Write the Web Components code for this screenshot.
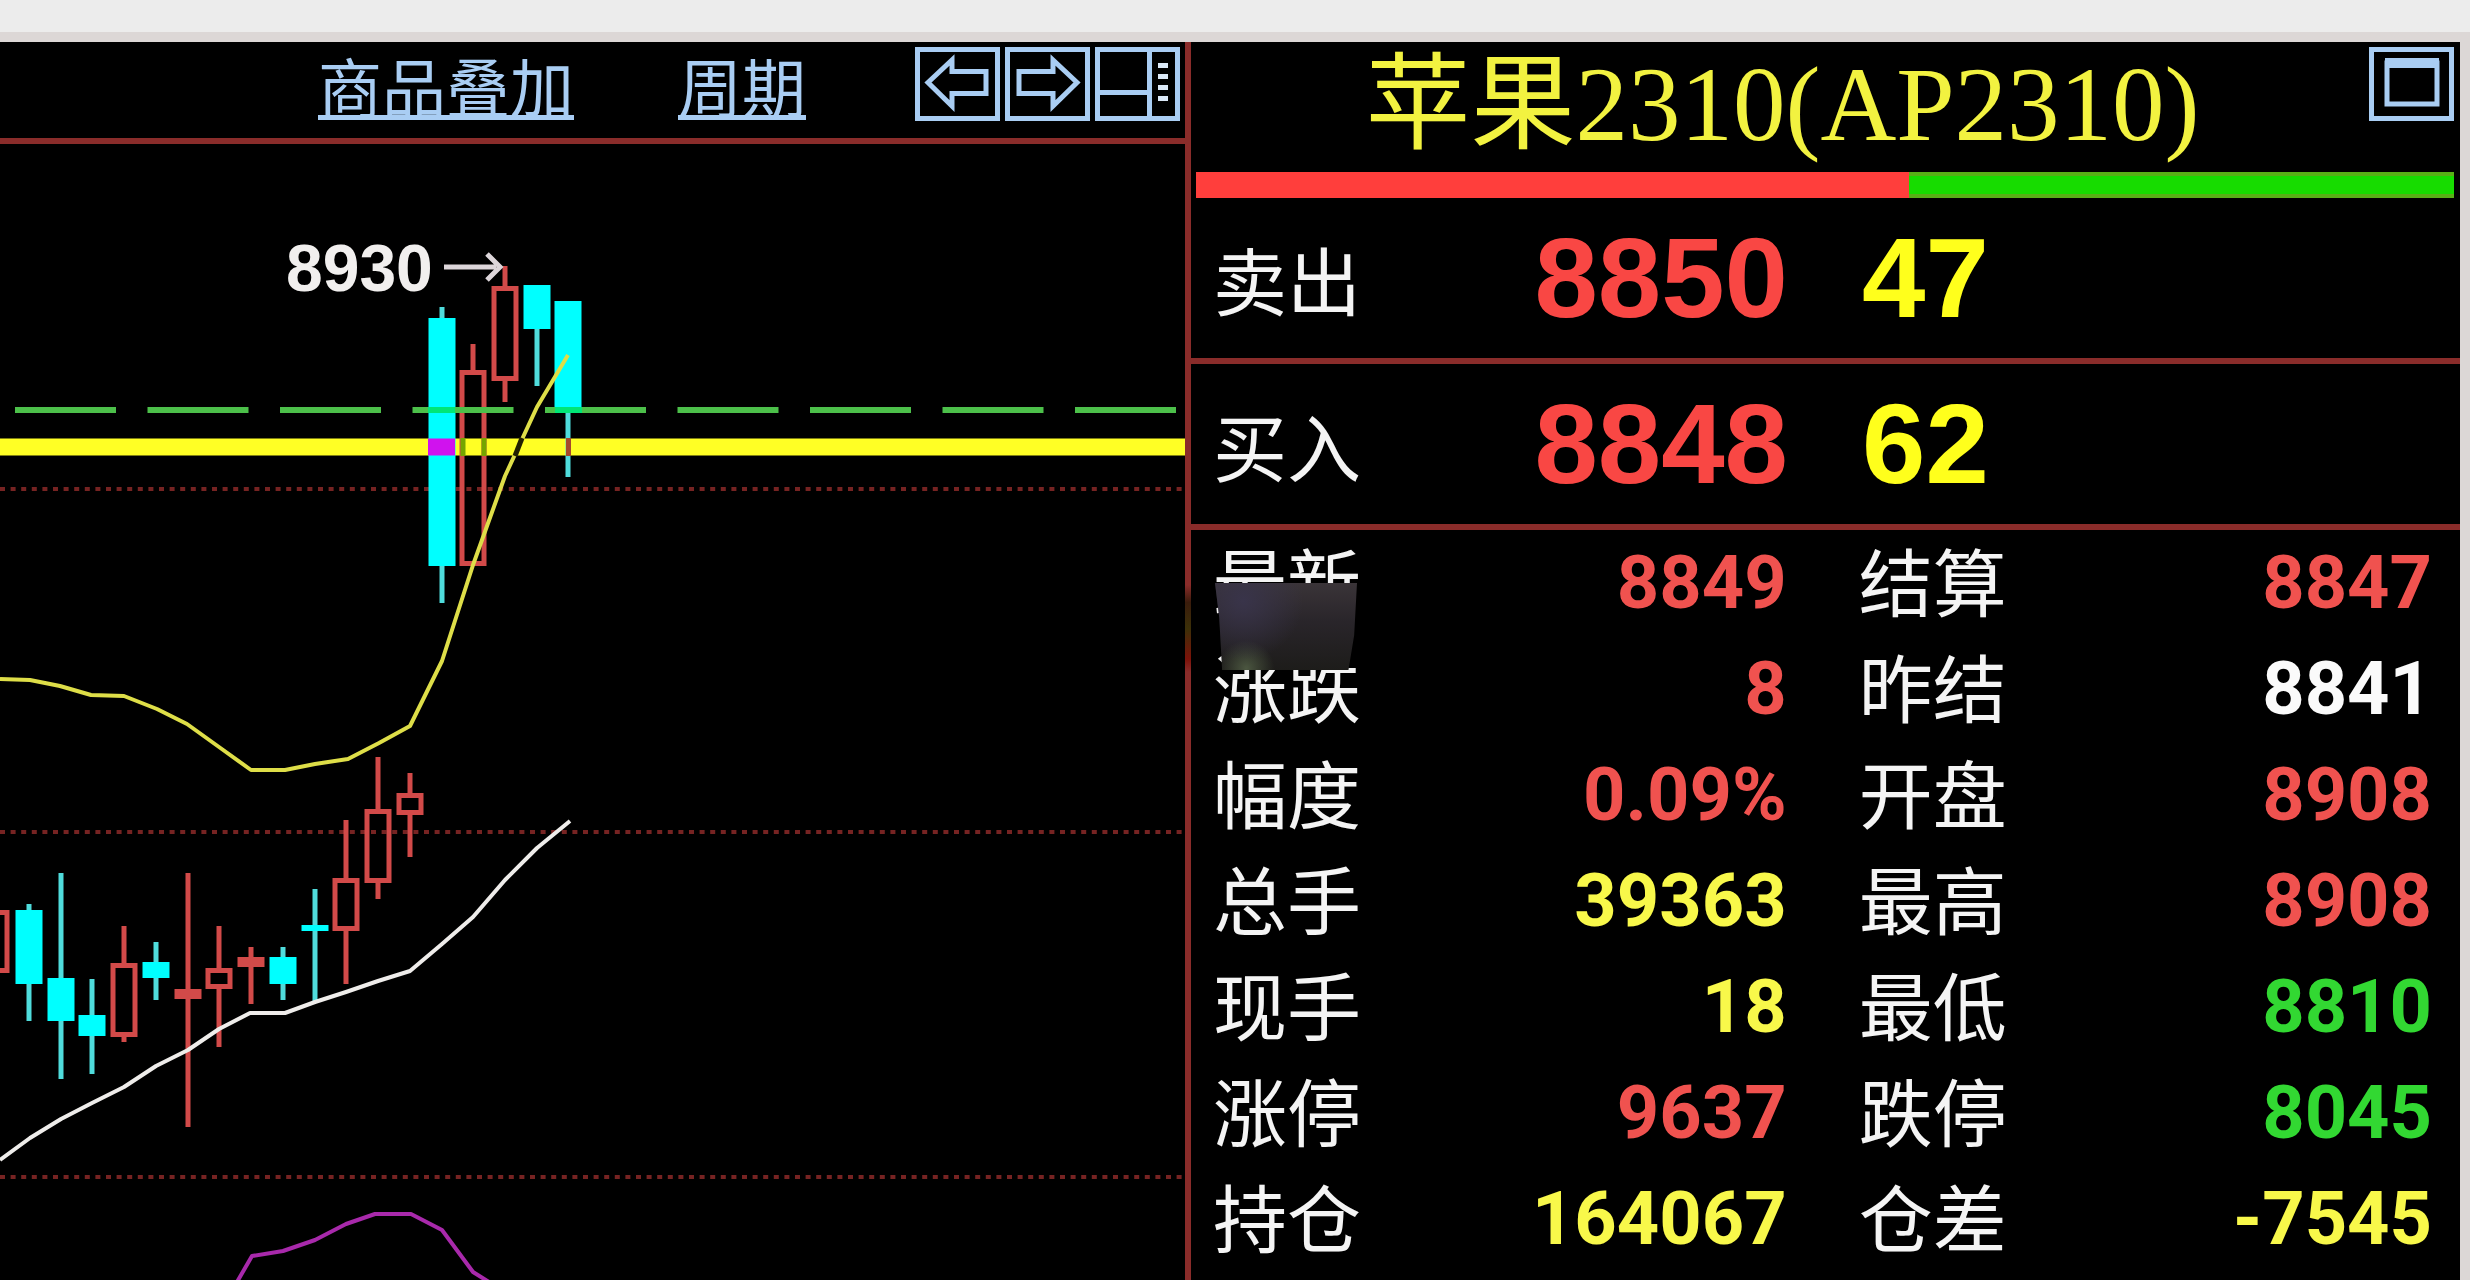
<!DOCTYPE html>
<html lang="zh-CN">
<head>
<meta charset="utf-8">
<title>苹果2310(AP2310)</title>
<style>
html, body { margin: 0; height: 100%; background: #000; }
body { font-family: "Liberation Sans", "Noto Sans CJK SC", sans-serif; }
</style>
</head>
<body>
<quote-app></quote-app>
<script>
const define = (name, html, setup) => customElements.define(name, class extends HTMLElement {
  constructor() {
    super();
    this.attachShadow({ mode: 'open' }).innerHTML = html;
  }
  connectedCallback() { if (setup) setup(this, this.shadowRoot); }
});

define('icon-button', `
<style>
:host { display: block; width: 85px; height: 74px; }
button { display: block; width: 100%; height: 100%; margin: 0; padding: 0; border: 0; background: #000; color: #a9cdf3; cursor: pointer; }
::slotted(svg) { display: block; width: 100%; height: 100%; fill: none; stroke: currentColor; stroke-width: 5; }
</style>
<button type="button"><slot></slot></button>`, (host, root) => {
  root.querySelector('button').setAttribute('aria-label', host.getAttribute('label') || '');
});

define('tool-bar', `
<style>
:host { display: flex; justify-content: flex-end; align-items: center; padding: 5px 5px 17px; border-bottom: 6px solid #8a2c2a; }
nav { display: flex; gap: 104px; margin-right: 109px; }
a { font: 64px/74px "Noto Sans CJK SC", sans-serif; font-weight: 400; color: #a9cdf3; text-decoration: underline; text-decoration-thickness: 5px; text-underline-offset: 3px; text-decoration-skip-ink: none; white-space: nowrap; }
.icons { display: flex; gap: 5px; }
</style>
<nav><a href="#overlay">商品叠加</a><a href="#period">周期</a></nav>
<div class="icons">
<icon-button label="后退"><svg viewBox="0 0 85 74"><path d="M2.500 2.500h80v69h-80z"/><path d="M71 24.500H37V13L13 35.500 37 59V46.500H71z"/></svg></icon-button>
<icon-button label="前进"><svg viewBox="0 0 85 74"><path d="M2.500 2.500h80v69h-80z"/><path d="M14 24.500H48V13L72 35.500 48 59V46.500H14z"/></svg></icon-button>
<icon-button label="布局"><svg viewBox="0 0 85 74"><path d="M2.500 2.500h80v69h-80zM54.500 2.500v69M2.500 45.500h52"/><path d="M63 18.500h10M63 29.500h10M63 40.500h10M63 51.500h10" stroke="#dbe9f8"/></svg></icon-button>
</div>`);

define('candle-chart', `
<style>
:host { display: block; min-height: 0; overflow: hidden; }
svg { display: block; width: 100%; height: 100%; }
text { font: bold 66px "Liberation Sans", sans-serif; fill: #f1efee; }
.grid { stroke: #762322; stroke-width: 4; stroke-dasharray: 5 5.6; }
.line { fill: none; stroke-width: 4; stroke-linejoin: round; }
</style>
<svg viewBox="0 144 1185 1136" preserveAspectRatio="xMinYMin slice" role="img" aria-label="K线图">
<g class="grid"><path d="M0 489H1185"/><path d="M0 832H1185"/><path d="M0 1177H1185"/></g>
<path d="M0 447H1185" stroke="#ffff25" stroke-width="17"/>
<g id="candles"></g>
<path d="M15 410H1185" stroke="#4cc04a" stroke-width="6" stroke-dasharray="101 31.500"/>
<path d="M428 410h27M555 410h27" stroke="#00e676" stroke-width="6"/>
<path d="M428 447h27" stroke="#d012ee" stroke-width="17"/>
<path d="M463 438v18M484 438v18" stroke="#75a500" stroke-width="5"/>
<path d="M568.500 438v18" stroke="#a5482c" stroke-width="5"/>
<polyline class="line" stroke="#dede48" points="0,679 30,680 60,686 91,695 124,696 157,709 187,724 219,747 251,770 285,770 315,764 348,759 379,743 410,726 442,661 473,565 505,476 537,407 568,355"/>
<path d="M515 456l7-18" stroke="#222000" stroke-width="5"/>
<polyline class="line" stroke="#efedeb" points="0,1160 30,1138 61,1119 92,1103 124,1087 156,1066 188,1050 219,1029 250,1013 285,1013 315,1002 346,992 378,981 410,971 442,944 473,917 505,880 537,848 570,821"/>
<polyline class="line" stroke="#a829ab" stroke-width="5" points="237,1282 252,1256 283,1251 315,1240 346,1224 375,1214 411,1214 442,1230 473,1272 489,1282"/>
<text x="286" y="291">8930</text>
<path d="M444 267h52M487 254l13 13-13 13" fill="none" stroke="#ddd6da" stroke-width="5"/>
</svg>`, (host, root) => {
  // [centre x, kind, body top, body bottom, wick top, wick bottom]
  const data = [
    [-4, 'up', 910, 973, 910, 973], [29, 'down', 910, 984, 904, 1021], [61, 'down', 978, 1021, 873, 1079],
    [92, 'down', 1015, 1036, 979, 1074], [124, 'up', 963, 1037, 926, 1042], [156, 'down', 962, 978, 942, 1000],
    [188, 'flat', 989, 999, 873, 1127], [219, 'up', 968, 989, 926, 1047], [251, 'flat', 957, 967, 947, 1004],
    [283, 'down', 957, 984, 947, 1000], [315, 'down', 925, 931, 889, 1002], [346, 'up', 878, 931, 820, 984],
    [378, 'up', 809, 883, 757, 899], [410, 'up', 793, 815, 773, 857], [442, 'down', 318, 566, 307, 603],
    [473, 'up', 370, 566, 344, 566], [505, 'up', 286, 381, 266, 402], [537, 'down', 285, 329, 285, 386],
    [568, 'down', 301, 413, 301, 477]
  ];
  root.getElementById('candles').innerHTML = data.map(([x, kind, t, b, wt, wb]) => {
    const red = '#d24a49';
    if (kind === 'up') return `<path d="M${x} ${wt}V${t}M${x} ${b}V${wb}M${x - 11} ${t + 2.5}H${x + 11}V${b - 2.5}H${x - 11}z" fill="none" stroke="${red}" stroke-width="5"/>`;
    const c = kind === 'down' ? '#00ffff' : red;
    return `<path d="M${x} ${wt}V${wb}" stroke="${kind === 'down' ? '#4fdcdc' : red}" stroke-width="5"/><path d="M${x - 13.5} ${t}h27V${b}h-27z" fill="${c}"/>`;
  }).join('');
});

define('quote-title', `
<style>
:host { display: flex; align-items: flex-start; padding: 5px 6px 0 5px; height: 125px; }
h1 { flex: 1; margin: 0; text-align: center; font: 105px/116px "Liberation Serif", "Noto Sans CJK SC", serif; font-weight: 400; color: #f2f240; white-space: nowrap; }
</style>
<h1><slot></slot></h1>
<icon-button label="最大化"><svg viewBox="0 0 85 74"><path d="M2.500 2.500h80v69h-80zM18 16h50v41h-50z"/><path d="M16 16h54" stroke-width="10"/></svg></icon-button>`);

define('ratio-bar', `
<style>
:host { display: flex; height: 26px; margin: 0 6px 0 5px; }
i { display: block; box-sizing: border-box; }
.sell { flex: 714; background: #ff3e3c; }
.buy { flex: 545; background: #17dc00; border: solid #58b016; border-width: 4px 0; }
</style>
<i class="sell"></i><i class="buy"></i>`);

define('order-row', `
<style>
:host { display: grid; grid-template-columns: 170px minmax(0, 427fr) minmax(0, 672fr); align-items: center; height: 160px; border-bottom: 6px solid #8a2c2a; }
.label { padding-left: 22px; font: 74px/106px "Noto Sans CJK SC", sans-serif; font-weight: 400; color: #f4f4f4; white-space: nowrap; }
.num { font: bold 114px/160px "Liberation Sans", sans-serif; }
.price { text-align: right; color: #f94744; }
.size { padding-left: 74px; color: #ffff1c; }
</style>
<span class="label"><slot></slot></span><span class="num price"></span><span class="num size"></span>`, (host, root) => {
  root.querySelector('.price').textContent = host.getAttribute('price');
  root.querySelector('.size').textContent = host.getAttribute('size');
});

define('quote-table', `
<style>
:host { display: block; position: relative; }
table { width: 100%; border-collapse: collapse; table-layout: fixed; }
th, td { height: 106px; padding: 0; white-space: nowrap; vertical-align: top; }
th { text-align: left; font: 74px/98px "Noto Sans CJK SC", sans-serif; font-weight: 400; color: #f4f4f4; }
td { text-align: right; font: 700 74px/106px Roboto, "Liberation Sans", sans-serif; }
th:nth-child(1) { width: 146px; padding-left: 22px; }
td:nth-child(2) { width: 33.700%; }
th:nth-child(3) { width: 148px; padding-left: 72px; }
td:nth-child(4) { padding-right: 28px; }
.r { color: #f0524f; } .y { color: #f8f84a; } .w { color: #fafafa; } .g { color: #32d832; }
.patch { position: absolute; left: 24px; top: 53px; width: 142px; height: 87px; background: radial-gradient(circle at 20% 20%, #39344a, transparent 45%), radial-gradient(circle at 22% 98%, #4b5640, transparent 20%), linear-gradient(#3a3438, #29252a 45%, #1d1c1a); clip-path: polygon(0 0, 100% 0, 98% 60%, 94% 100%, 5% 100%, 3% 40%); }
</style>
<table><tbody></tbody></table>
<div class="patch"></div>`, (host, root) => {
  const rows = [
    ['最新', '8849', 'r', '结算', '8847', 'r'], ['涨跌', '8', 'r', '昨结', '8841', 'w'],
    ['幅度', '0.09%', 'r', '开盘', '8908', 'r'], ['总手', '39363', 'y', '最高', '8908', 'r'],
    ['现手', '18', 'y', '最低', '8810', 'g'], ['涨停', '9637', 'r', '跌停', '8045', 'g'],
    ['持仓', '164067', 'y', '仓差', '-7545', 'y']
  ];
  root.querySelector('tbody').innerHTML = rows.map(([a, b, c, d, e, f]) =>
    `<tr><th scope="row">${a}</th><td class="${c}">${b}</td><th scope="row">${d}</th><td class="${f}">${e}</td></tr>`).join('');
});

define('quote-app', `
<style>
:host { display: flex; flex-direction: column; box-sizing: border-box; height: 100vh; overflow: hidden; background: #000; }
header { height: 32px; background: #ececec; border-bottom: 10px solid #dcd7d6; flex: none; }
main { flex: 1; min-height: 0; display: grid; grid-template-columns: minmax(0, 1185fr) minmax(0, 1275fr); grid-template-rows: minmax(0, 1fr); border-right: 10px solid #dcd7d6; }
.chart { display: flex; flex-direction: column; min-height: 0; }
candle-chart { flex: 1; }
.quote { position: relative; min-width: 0; border-left: 6px solid #8a2c2a; }
.fade { position: absolute; left: -6px; top: 543px; width: 6px; height: 87px; background: linear-gradient(#8a2c2a, #3a1c0c 20%, #3c3008 50%, #7c1209 85%, #8a2c2a); }
</style>
<header></header>
<main>
<section class="chart"><tool-bar></tool-bar><candle-chart></candle-chart></section>
<section class="quote">
<quote-title>苹果2310(AP2310)</quote-title>
<ratio-bar></ratio-bar>
<order-row price="8850" size="47">卖出</order-row>
<order-row price="8848" size="62">买入</order-row>
<quote-table></quote-table>
<div class="fade"></div>
</section>
</main>`);
</script>
</body>
</html>
